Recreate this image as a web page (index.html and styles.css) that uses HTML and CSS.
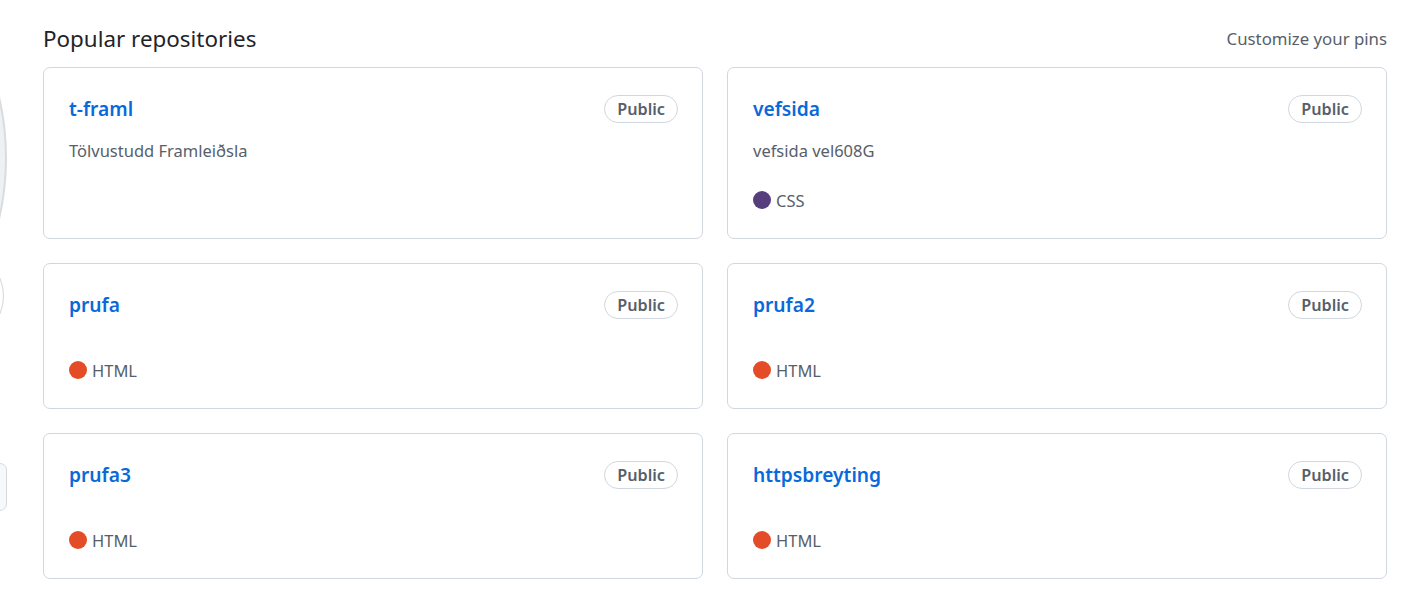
FILE: index.html
```html
<!DOCTYPE html>
<html lang="en">
<head>
<meta charset="utf-8">
<title>Popular repositories</title>
<link rel="stylesheet" href="styles.css">
</head>
<body>
<div class="page">
  <aside class="sidebar">
    <div class="avatar"></div>
    <div class="status"></div>
    <div class="edit-btn"></div>
  </aside>
  <main class="main">
    <div class="section-head">
      <h2 class="section-title">Popular repositories</h2>
      <a class="customize" href="#">Customize your pins</a>
    </div>
    <ol class="pins">
      <li class="pin">
        <div class="pin-top"><a class="repo" href="#">t-framl</a><span class="badge">Public</span></div>
        <p class="desc">Tölvustudd Framleiðsla</p>
      </li>
      <li class="pin">
        <div class="pin-top"><a class="repo" href="#">vefsida</a><span class="badge">Public</span></div>
        <p class="desc">vefsida vel608G</p>
        <p class="lang"><span class="dot dot-css"></span>CSS</p>
      </li>
      <li class="pin">
        <div class="pin-top"><a class="repo" href="#">prufa</a><span class="badge">Public</span></div>
        <p class="desc"></p>
        <p class="lang"><span class="dot dot-html"></span>HTML</p>
      </li>
      <li class="pin">
        <div class="pin-top"><a class="repo" href="#">prufa2</a><span class="badge">Public</span></div>
        <p class="desc"></p>
        <p class="lang"><span class="dot dot-html"></span>HTML</p>
      </li>
      <li class="pin">
        <div class="pin-top"><a class="repo" href="#">prufa3</a><span class="badge">Public</span></div>
        <p class="desc"></p>
        <p class="lang"><span class="dot dot-html"></span>HTML</p>
      </li>
      <li class="pin">
        <div class="pin-top"><a class="repo" href="#">httpsbreyting</a><span class="badge">Public</span></div>
        <p class="desc"></p>
        <p class="lang"><span class="dot dot-html"></span>HTML</p>
      </li>
    </ol>
  </main>
</div>
</body>
</html>
```
FILE: styles.css
```css
* { box-sizing: border-box; }
html, body {
  margin: 0;
  background: #ffffff;
  font-family: "Noto Sans", "Open Sans", sans-serif;
  color: #1f2328;
}
.page {
  display: flex;
  height: 600px;
  overflow: hidden;
}
.sidebar {
  width: 10px;
  flex: none;
  overflow: hidden;
  display: flex;
  flex-direction: column;
  align-items: flex-end;
}
.avatar {
  flex: none;
  width: 540px;
  height: 540px;
  margin-top: -112px;
  margin-right: 3px;
  border-radius: 50%;
  background: #eff0f2;
  border: 2px solid #d9dcdf;
}
.status {
  flex: none;
  width: 94px;
  height: 94px;
  margin-top: -179px;
  margin-right: 6px;
  border-radius: 50%;
  background: #ffffff;
  border: 1px solid #d0d7de;
}
.edit-btn {
  flex: none;
  width: 200px;
  height: 48px;
  margin-top: 120px;
  margin-right: 3px;
  border-radius: 7px;
  background: #f6f8fa;
  border: 1px solid #d5dadf;
}
.main {
  margin-left: 33px;
  width: 1344px;
  flex: none;
}
.section-head {
  display: flex;
  justify-content: space-between;
  align-items: center;
  margin-top: 23px;
  height: 30px;
  margin-bottom: 14px;
}
.section-title {
  margin: 0;
  font-size: 22.4px;
  font-weight: 400;
  color: #1f2328;
}
.customize {
  font-size: 16.8px;
  color: #57606a;
  text-decoration: none;
}
.pins {
  list-style: none;
  margin: 0;
  padding: 0;
  display: grid;
  grid-template-columns: 660px 660px;
  gap: 24px;
}
.pin {
  border: 1px solid #d0d7de;
  border-radius: 7px;
  padding: 24px 24px 25px 25px;
  display: flex;
  flex-direction: column;
}
.pin-top {
  display: flex;
  align-items: center;
  justify-content: space-between;
  height: 33px;
}
.repo {
  font-size: 19.2px;
  font-weight: 600;
  color: #0969da;
  text-decoration: none;
}
.badge {
  height: 28px;
  display: inline-flex;
  align-items: center;
  padding: 0 12px;
  border: 1px solid #d0d7de;
  border-radius: 14px;
  font-size: 16.2px;
  font-weight: 600;
  color: #57606a;
}
.desc {
  margin: 13px 0 0;
  font-size: 16.5px;
  line-height: 26px;
  color: #57606a;
}
.desc:empty { line-height: 0; }
.lang {
  margin: 23px 0 0;
  display: flex;
  align-items: center;
  height: 26px;
  font-size: 16.5px;
  color: #57606a;
}
.dot {
  width: 18px;
  height: 18px;
  border-radius: 50%;
  margin-right: 5px;
  flex: none;
}
.dot-css { background: #563d7c; }
.dot-html { background: #e34c26; }
```
